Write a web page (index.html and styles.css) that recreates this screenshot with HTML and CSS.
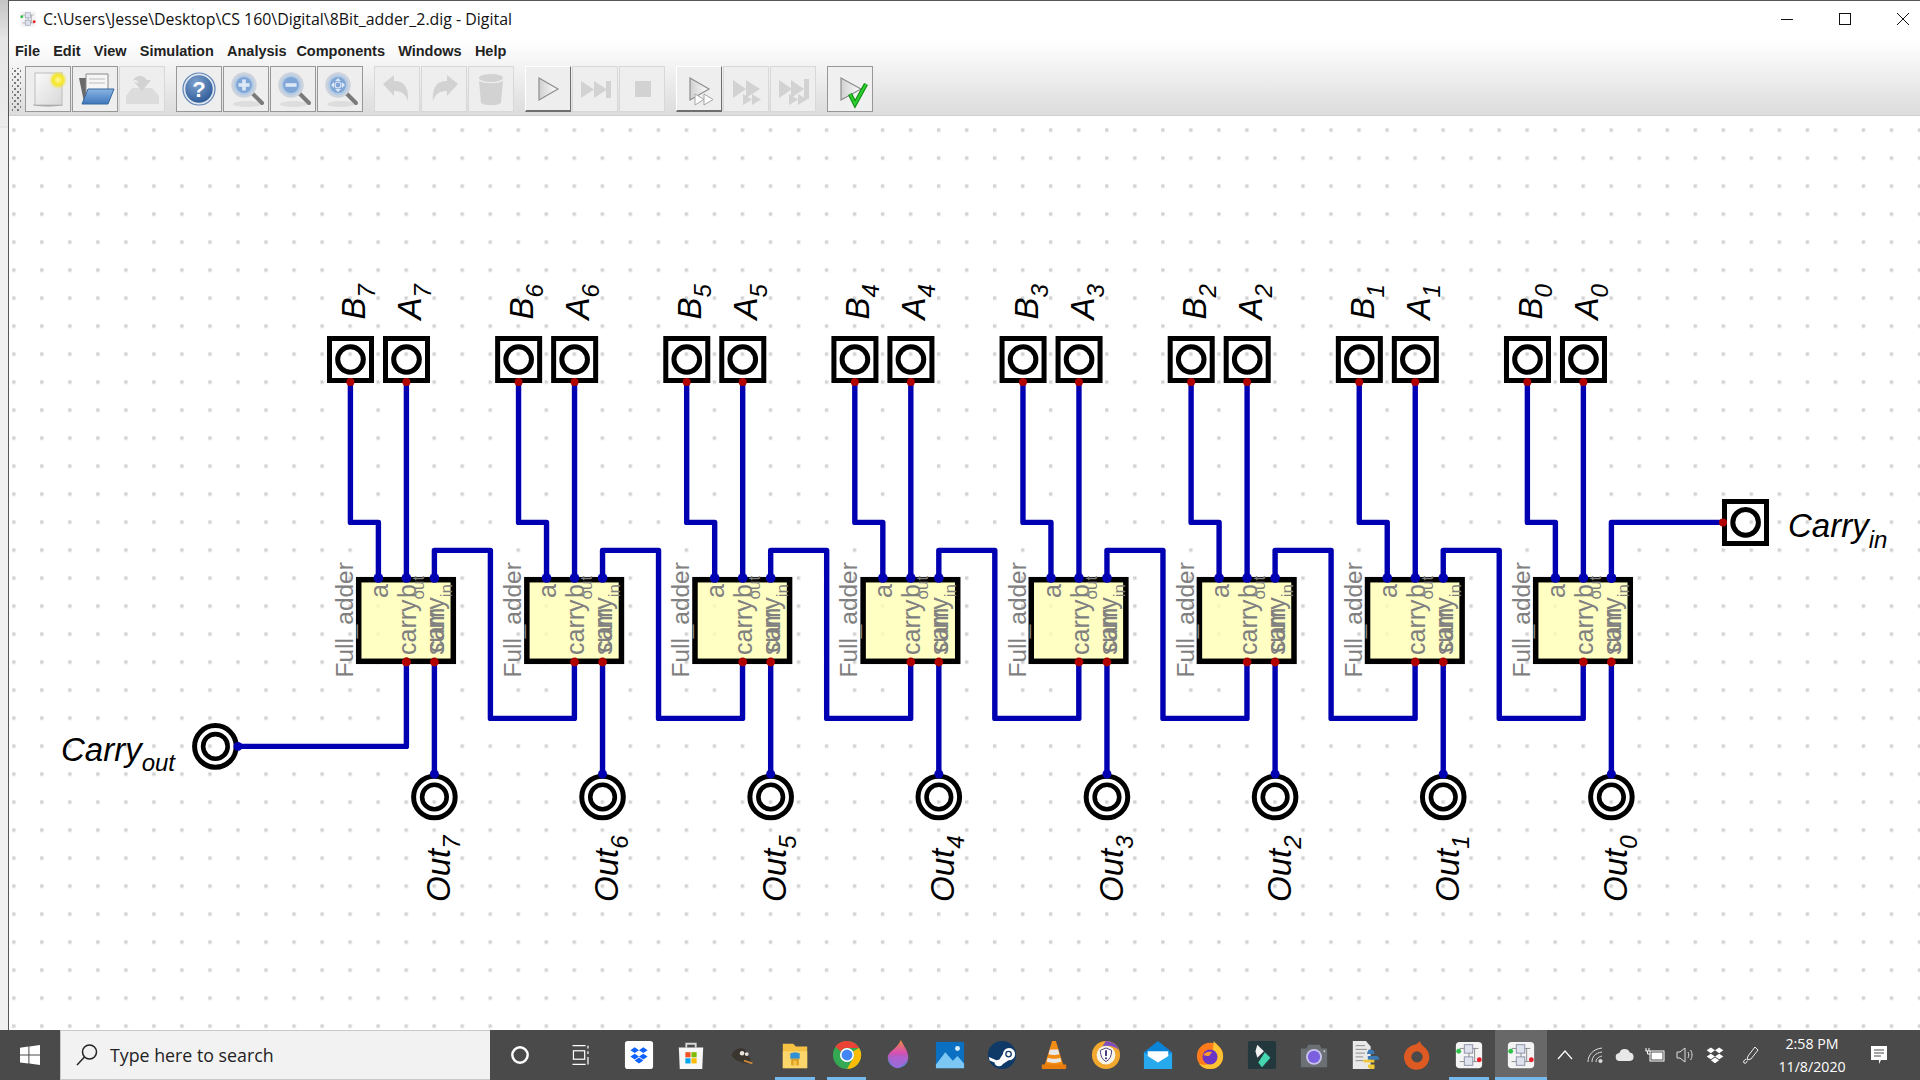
FILE: index.html
```html
<!DOCTYPE html>
<html lang="en">
<head>
  <meta charset="UTF-8" />
  <title>8Bit_adder_2.dig - Digital</title>
  <link rel="stylesheet" href="styles.css">
</head>
<body>

  <!-- shared icons -->
  <svg class="sprite" aria-hidden="true">
    <defs>
      <linearGradient id="gPage" x1="0" y1="0" x2="1" y2="1"><stop offset="0" stop-color="#fafafa"/><stop offset="1" stop-color="#d8d8d8"/></linearGradient>
      <linearGradient id="gPlay" x1="0" y1="0" x2="1" y2="0"><stop offset="0" stop-color="#d0d0d0"/><stop offset="1" stop-color="#fdfdfd"/></linearGradient>
      <linearGradient id="gFolder" x1="0" y1="0" x2="0" y2="1"><stop offset="0" stop-color="#8ab4e4"/><stop offset="1" stop-color="#3f78bd"/></linearGradient>
      <radialGradient id="gHelp" cx=".4" cy=".3" r=".8"><stop offset="0" stop-color="#7fa3d0"/><stop offset="1" stop-color="#23508f"/></radialGradient>
      <radialGradient id="gGlow"><stop offset="0" stop-color="#fff9a0"/><stop offset=".55" stop-color="#f4e524"/><stop offset="1" stop-color="#f4e524" stop-opacity="0"/></radialGradient>
      <linearGradient id="gFlame" x1="0" y1="0" x2="0" y2="1"><stop offset="0" stop-color="#f28a3c"/><stop offset=".45" stop-color="#d84fb4"/><stop offset="1" stop-color="#3f8fe0"/></linearGradient>

      <symbol id="lens" viewBox="0 0 44 44">
        <ellipse cx="23" cy="37" rx="14" ry="3" fill="#ddd"/>
        <path d="M28 26l10 10" stroke="#7a7a7a" stroke-width="4" stroke-linecap="round"/>
        <circle cx="20" cy="18" r="11.500" fill="#b4cbe6" stroke="#cdd3dc" stroke-width="2.500"/>
        <circle cx="20" cy="18" r="8" fill="#7fa6d6"/>
      </symbol>

      <symbol id="app" viewBox="0 0 32 32">
        <rect x="2" y="2" width="28" height="28" rx="4" fill="#f4f4f4"/>
        <path d="M6 9h6M20 9h6M6 23h6M20 23h6M16 13v6M22 9v14" stroke="#8a8a8a" fill="none"/>
        <rect x="11" y="5" width="9" height="9" fill="#dfe3ee" stroke="#8b8fa8"/>
        <rect x="11" y="18" width="9" height="9" fill="#dfe3ee" stroke="#8b8fa8"/>
        <circle cx="5" cy="12" r="2.6" fill="#2fc24a"/>
        <circle cx="27" cy="21" r="2.6" fill="#e8202a"/>
      </symbol>

      <symbol id="dbx" viewBox="0 0 24 24">
        <path d="M7 3l5 3.4-5 3.4-5-3.4zM17 3l5 3.4-5 3.4-5-3.4zM7 10.4l5 3.4-5 3.4-5-3.4zM17 10.4l5 3.4-5 3.4-5-3.4zM12 15l5 3.4-5 3.4-5-3.4z"/>
      </symbol>

      <!-- schematic parts, drawn at the position of the leftmost bit -->
      <g id="input">
        <rect class="part" x="329.5" y="338.5" width="42" height="42"/>
        <circle class="part" cx="350.5" cy="359.5" r="12.8"/>
        <circle class="pin-out" cx="350.4" cy="382" r="4"/>
      </g>
      <g id="output">
        <circle class="part" cx="434.4" cy="797" r="20.8"/>
        <circle class="part part-thin" cx="434.4" cy="797" r="12.3"/>
      </g>
      <g id="bit">
        <path class="wire" d="M350 382V522H378V578"/>
        <path class="wire" d="M406 382V578"/>
        <path class="wire" d="M434 662V774"/>
        <use href="#input"/>
        <use href="#input" x="56"/>
        <use href="#output"/>
        <circle class="pin-in" cx="434.4" cy="774" r="4.5"/>

        <rect class="adder" x="358.7" y="579.7" width="94.6" height="81.6"/>
        <text class="pin-text pin-title" transform="translate(353 677.5) rotate(-90)">Full_adder</text>
        <text class="pin-text" transform="translate(388 584) rotate(-90)" text-anchor="end">a</text>
        <text class="pin-text" transform="translate(416 584) rotate(-90)" text-anchor="end">b</text>
        <text class="pin-text" transform="translate(444 584) rotate(-90)" text-anchor="end">carry<tspan class="pin-sub" dy="8">in</tspan></text>
        <text class="pin-text" transform="translate(416 655) rotate(-90)">carry<tspan class="pin-sub" dy="8">out</tspan></text>
        <text class="pin-text" transform="translate(444 655) rotate(-90)">sum</text>

        <circle class="pin-in" cx="378.4" cy="578" r="4.8"/>
        <circle class="pin-in" cx="406.4" cy="578" r="4.8"/>
        <circle class="pin-in" cx="434.4" cy="578" r="4.8"/>
        <circle class="pin-out" cx="406.4" cy="662" r="4.4"/>
        <circle class="pin-out" cx="434.4" cy="662" r="4.4"/>
      </g>
      <path id="carry" class="wire" d="M434 578V550H490V718H574V662"/>
    </defs>
  </svg>

  <div class="desktop">
    <div class="strip"></div>

    <div class="window">
      <div class="titlebar">
        <svg class="app-icon"><use href="#app"/></svg>
        <span class="title">C:\Users\Jesse\Desktop\CS 160\Digital\8Bit_adder_2.dig - Digital</span>
        <div class="controls">
          <svg width="14" height="14" viewBox="0 0 14 14"><path d="M1 7.5h12" stroke="#111"/></svg>
          <svg width="14" height="14" viewBox="0 0 14 14"><rect x="1.5" y="1.5" width="11" height="11" fill="none" stroke="#111"/></svg>
          <svg width="14" height="14" viewBox="0 0 14 14"><path d="M1 1l12 12M13 1L1 13" stroke="#111"/></svg>
        </div>
      </div>

      <div class="chrome">
        <nav class="menu">
          <span>File</span><span>Edit</span><span>View</span><span>Simulation</span><span class="menu-tight">Analysis</span><span>Components</span><span>Windows</span><span>Help</span>
        </nav>

        <div class="toolbar">
          <div class="grip"></div>

          <div class="tool-group">
            <div class="btn"><svg viewBox="0 0 44 44">
              <ellipse cx="22" cy="38" rx="15" ry="1.5" fill="#999"/>
              <rect x="9" y="6" width="27" height="32" fill="url(#gPage)" stroke="#bdbdbd"/>
              <circle cx="32" cy="13" r="9" fill="url(#gGlow)"/>
            </svg></div>
            <div class="btn"><svg viewBox="0 0 44 44">
              <path d="M6 11h10l2 2v22H11z" fill="#6a6a6a"/>
              <path d="M13 7h22v24H13z" fill="#f6f6f6" stroke="#8a8a8a"/>
              <path d="M16 12h16M16 16h16" stroke="#bbb"/>
              <path d="M15 22h26l-6 15H9z" fill="url(#gFolder)" stroke="#35679f"/>
            </svg></div>
            <div class="btn btn-off"><svg viewBox="0 0 44 44" fill="#d2d2d2">
              <path d="M12 21h20l7 8v8H6v-8z" fill="#dcdcdc"/>
              <path d="M13 14c2-6 10-7 14-1h4l-9 11-8-9 4 1c0-3-3-4-5-2z"/>
            </svg></div>
          </div>

          <div class="tool-group">
            <div class="btn"><svg viewBox="0 0 44 44">
              <circle cx="22" cy="22" r="14.5" fill="url(#gHelp)" stroke="#dfe6f0" stroke-width="1.6"/>
              <circle cx="22" cy="22" r="16" fill="none" stroke="#5c81b4" stroke-width="1.2"/>
              <text class="help-mark" x="22" y="29.5" text-anchor="middle">?</text>
            </svg></div>
            <div class="btn"><svg viewBox="0 0 44 44">
              <use href="#lens" width="44" height="44"/>
              <path d="M20 12.5v11M14.5 18h11" stroke="#dce8f6" stroke-width="3.6"/>
            </svg></div>
            <div class="btn"><svg viewBox="0 0 44 44">
              <use href="#lens" width="44" height="44"/>
              <path d="M14.5 18h11" stroke="#dce8f6" stroke-width="3.6"/>
            </svg></div>
            <div class="btn"><svg viewBox="0 0 44 44">
              <use href="#lens" width="44" height="44"/>
              <path d="M20 11l3 3h-6zM20 25l3-3h-6zM13 18l3-3v6zM27 18l-3-3v6z" fill="#dce8f6"/>
              <circle cx="20" cy="18" r="3" fill="none" stroke="#dce8f6" stroke-width="1.2"/>
            </svg></div>
          </div>

          <div class="tool-group">
            <div class="btn btn-off"><svg viewBox="0 0 44 44" fill="#d2d2d2">
              <path d="M8 17l11-9v6c9 0 15 5 14 20-3-8-7-10-14-10v5z"/>
            </svg></div>
            <div class="btn btn-off"><svg viewBox="0 0 44 44" fill="#d2d2d2">
              <path d="M36 17L25 8v6c-9 0-15 5-14 20 3-8 7-10 14-10v5z"/>
            </svg></div>
            <div class="btn btn-off"><svg viewBox="0 0 44 44" fill="#d2d2d2">
              <ellipse cx="22" cy="11" rx="12" ry="4"/>
              <path d="M10 14c6 3 18 3 24 0l-2 22c-4 3-16 3-20 0z"/>
            </svg></div>
          </div>

          <div class="tool-group">
            <div class="btn btn-raised"><svg viewBox="0 0 44 44">
              <path d="M13 11l19 11-19 11z" fill="url(#gPlay)" stroke="#8d8d8d" stroke-width="1.2"/>
            </svg></div>
            <div class="btn btn-off"><svg viewBox="0 0 44 44" fill="#d2d2d2">
              <path d="M8 14l13 8.500-13 8.500zM21 14l13 8.500-13 8.500zM33 14h5v17h-5z"/>
            </svg></div>
            <div class="btn btn-off"><svg viewBox="0 0 44 44"><rect x="15" y="14" width="16" height="16" fill="#d2d2d2"/></svg></div>
          </div>

          <div class="tool-group">
            <div class="btn btn-raised"><svg viewBox="0 0 44 44">
              <path d="M13 11l19 11-19 11z" fill="url(#gPlay)" stroke="#8d8d8d" stroke-width="1.2"/>
              <path d="M18 27l9 5.500-9 5.500zM27 27l9 5.500-9 5.500z" fill="#fff" stroke="#a5a5a5"/>
            </svg></div>
            <div class="btn btn-off"><svg viewBox="0 0 44 44" fill="#d2d2d2">
              <path d="M9 13l13 9-13 9zM22 13l14 9-14 9zM19 27l9 5.500-9 5.500zM28 27l9 5.500-9 5.500z"/>
            </svg></div>
            <div class="btn btn-off"><svg viewBox="0 0 44 44" fill="#d2d2d2">
              <path d="M8 13l13 9-13 9zM20 13l13 9-13 9zM33 12h5v20h-5zM18 27l9 5.500-9 5.500zM27 27l9 5.500-9 5.500z"/>
            </svg></div>
          </div>

          <div class="tool-group">
            <div class="btn btn-check"><svg viewBox="0 0 44 44">
              <path d="M13 11l20 11-20 11z" fill="url(#gPlay)" stroke="#8d8d8d" stroke-width="1.2"/>
              <path d="M22 27l5 10 11-20" fill="none" stroke="#0c8f12" stroke-width="4.400"/>
              <path d="M22 27l5 10 11-20" fill="none" stroke="#2fd02f" stroke-width="2"/>
            </svg></div>
          </div>
        </div>
      </div>

      <svg class="canvas" viewBox="9 116 1911 914">
        <defs>
          <pattern id="dots" x="320.4" y="296.4" width="28.025" height="28" patternUnits="userSpaceOnUse">
            <rect width="3.4" height="3.4" fill="#d2d2d2"/>
          </pattern>
        </defs>
        <rect x="9" y="116" width="1911" height="914" fill="#fff"/>
        <rect x="9" y="116" width="1911" height="914" fill="url(#dots)"/>

        <!-- carry chain between the bits -->
        <use href="#carry"/>
        <use href="#carry" x="168.14"/>
        <use href="#carry" x="336.28"/>
        <use href="#carry" x="504.42"/>
        <use href="#carry" x="672.56"/>
        <use href="#carry" x="840.7"/>
        <use href="#carry" x="1008.84"/>

        <g>
          <use href="#bit"/>
          <text class="label" transform="translate(365 319.5) rotate(-90)">B<tspan class="sub" dy="10">7</tspan></text>
          <text class="label" transform="translate(421 319.5) rotate(-90)">A<tspan class="sub" dy="10">7</tspan></text>
          <text class="label" transform="translate(450 902) rotate(-90)">Out<tspan class="sub" dy="10">7</tspan></text>
        </g>
        <g transform="translate(168.14 0)">
          <use href="#bit"/>
          <text class="label" transform="translate(365 319.5) rotate(-90)">B<tspan class="sub" dy="10">6</tspan></text>
          <text class="label" transform="translate(421 319.5) rotate(-90)">A<tspan class="sub" dy="10">6</tspan></text>
          <text class="label" transform="translate(450 902) rotate(-90)">Out<tspan class="sub" dy="10">6</tspan></text>
        </g>
        <g transform="translate(336.28 0)">
          <use href="#bit"/>
          <text class="label" transform="translate(365 319.5) rotate(-90)">B<tspan class="sub" dy="10">5</tspan></text>
          <text class="label" transform="translate(421 319.5) rotate(-90)">A<tspan class="sub" dy="10">5</tspan></text>
          <text class="label" transform="translate(450 902) rotate(-90)">Out<tspan class="sub" dy="10">5</tspan></text>
        </g>
        <g transform="translate(504.42 0)">
          <use href="#bit"/>
          <text class="label" transform="translate(365 319.5) rotate(-90)">B<tspan class="sub" dy="10">4</tspan></text>
          <text class="label" transform="translate(421 319.5) rotate(-90)">A<tspan class="sub" dy="10">4</tspan></text>
          <text class="label" transform="translate(450 902) rotate(-90)">Out<tspan class="sub" dy="10">4</tspan></text>
        </g>
        <g transform="translate(672.56 0)">
          <use href="#bit"/>
          <text class="label" transform="translate(365 319.5) rotate(-90)">B<tspan class="sub" dy="10">3</tspan></text>
          <text class="label" transform="translate(421 319.5) rotate(-90)">A<tspan class="sub" dy="10">3</tspan></text>
          <text class="label" transform="translate(450 902) rotate(-90)">Out<tspan class="sub" dy="10">3</tspan></text>
        </g>
        <g transform="translate(840.7 0)">
          <use href="#bit"/>
          <text class="label" transform="translate(365 319.5) rotate(-90)">B<tspan class="sub" dy="10">2</tspan></text>
          <text class="label" transform="translate(421 319.5) rotate(-90)">A<tspan class="sub" dy="10">2</tspan></text>
          <text class="label" transform="translate(450 902) rotate(-90)">Out<tspan class="sub" dy="10">2</tspan></text>
        </g>
        <g transform="translate(1008.84 0)">
          <use href="#bit"/>
          <text class="label" transform="translate(365 319.5) rotate(-90)">B<tspan class="sub" dy="10">1</tspan></text>
          <text class="label" transform="translate(421 319.5) rotate(-90)">A<tspan class="sub" dy="10">1</tspan></text>
          <text class="label" transform="translate(450 902) rotate(-90)">Out<tspan class="sub" dy="10">1</tspan></text>
        </g>
        <g transform="translate(1176.98 0)">
          <use href="#bit"/>
          <text class="label" transform="translate(365 319.5) rotate(-90)">B<tspan class="sub" dy="10">0</tspan></text>
          <text class="label" transform="translate(421 319.5) rotate(-90)">A<tspan class="sub" dy="10">0</tspan></text>
          <text class="label" transform="translate(450 902) rotate(-90)">Out<tspan class="sub" dy="10">0</tspan></text>
        </g>

        <!-- carry in -->
        <path class="wire" d="M1611 578V522H1723"/>
        <circle class="pin-in" cx="1611.4" cy="578" r="4.8"/>
        <rect class="part" x="1724.5" y="501.5" width="42" height="42"/>
        <circle class="part" cx="1745.6" cy="522.4" r="12.8"/>
        <circle class="pin-out" cx="1723" cy="522.4" r="4"/>
        <text class="label" x="1788" y="537">Carry<tspan class="sub" dy="11">in</tspan></text>

        <!-- carry out -->
        <path class="wire" d="M406 662V746H238"/>
        <circle class="part" cx="215.4" cy="746.4" r="20.8"/>
        <circle class="part part-thin" cx="215.4" cy="746.4" r="12.3"/>
        <circle class="pin-in" cx="238" cy="746.4" r="4.5"/>
        <circle class="pin-out" cx="406.4" cy="662" r="4.4"/>
        <text class="label" x="61" y="761">Carry<tspan class="sub" dy="10">out</tspan></text>
      </svg>
    </div>
  </div>

  <footer class="taskbar">
    <div class="start">
      <svg width="22" height="22" viewBox="0 0 22 22" fill="#fff"><path d="M1 3.8l8.4-1.2v8H1zM10.4 2.4L21 1v9.6H10.4zM1 11.6h8.4v8L1 18.4zM10.4 11.6H21V21l-10.6-1.4z"/></svg>
    </div>
    <div class="search">
      <svg width="24" height="24" viewBox="0 0 24 24" fill="none" stroke="#222" stroke-width="1.5"><circle cx="14.5" cy="9" r="7"/><path d="M9.5 14L2 22"/></svg>
      <span>Type here to search</span>
    </div>

    <div class="tile tile-wide"><svg class="ico" viewBox="0 0 32 32"><circle cx="16" cy="16" r="8.2" fill="none" stroke="#fff" stroke-width="2.6"/></svg></div>
    <div class="tile tile-wide"><svg class="ico" viewBox="0 0 32 32" fill="none" stroke="#fff" stroke-width="1.3"><path d="M8 6h14M8 26h14M24.5 6v3M24.5 12v3M24.5 18v8"/><rect x="9" y="11.5" width="12" height="9"/></svg></div>

    <div class="tile tile-first"><svg class="ico" viewBox="0 0 32 32">
      <rect x="1" y="1" width="30" height="30" rx="3" fill="#fff"/>
      <use href="#dbx" x="5" y="4" width="22" height="24" fill="#0f62fe"/>
    </svg></div>
    <div class="tile"><svg class="ico" viewBox="0 0 32 32">
      <path d="M11 8V4h10v4" fill="none" stroke="#d8d8d8" stroke-width="2"/>
      <path d="M3 8h26l-1 23H4z" fill="#f7f7f7"/>
      <path d="M10 13h5.500v5.500H10z" fill="#f25022"/><path d="M16.500 13H22v5.500h-5.500z" fill="#7fba00"/>
      <path d="M10 19.500h5.500V25H10z" fill="#00a4ef"/><path d="M16.500 19.500H22V25h-5.500z" fill="#ffb900"/>
    </svg></div>
    <div class="tile"><svg class="ico" viewBox="0 0 32 32">
      <path d="M4 16c2-6 9-9 14-6l4 6 3 8c-5 2-9 1-11-1-3 0-8-2-10-7z" fill="#3b3530"/>
      <circle cx="15" cy="14" r="2.400" fill="#e8e4dc"/><circle cx="20" cy="15" r="2" fill="#e8e4dc"/>
      <path d="M17 22l9 3" stroke="#c78a3a" stroke-width="2"/>
    </svg></div>
    <div class="tile tile-open"><svg class="ico" viewBox="0 0 32 32">
      <path d="M3 4h11l3 3h12v23H3z" fill="#f5c244"/>
      <path d="M3 12h26v18H3z" fill="#fbd66a"/>
      <path d="M11 14l5-1 5 1v6H11z" fill="#2f90d8"/>
      <rect x="12" y="20" width="8" height="7" fill="#d79a22"/><rect x="14" y="22" width="4" height="5" fill="#f5c244"/>
    </svg></div>
    <div class="tile tile-open"><svg class="ico" viewBox="0 0 32 32">
      <circle cx="16" cy="16" r="15" fill="#34a853"/>
      <path d="M16 1a15 15 0 0 1 13 7.500H16a7.500 7.500 0 0 0-6.500 3.700L3.500 7A15 15 0 0 1 16 1z" fill="#ea4335"/>
      <path d="M29 8.500A15 15 0 0 1 16 31l6.500-11.500A7.500 7.500 0 0 0 22.500 12z" fill="#fbbc05"/>
      <circle cx="16" cy="16" r="7.500" fill="#fff"/><circle cx="16" cy="16" r="5.800" fill="#4285f4"/>
    </svg></div>
    <div class="tile"><svg class="ico" viewBox="0 0 32 32">
      <path d="M19 0c3 6 8 12 8 19a11 11 0 0 1-22 0C5 12 15 10 19 0z" fill="url(#gFlame)"/>
      <path d="M8 20c5-5 11-4 18-1-2 6-6 11-11 11-4 0-7-4-7-10z" fill="#b85fd6" opacity=".7"/>
    </svg></div>
    <div class="tile"><svg class="ico" viewBox="0 0 32 32">
      <rect x="1" y="2" width="30" height="28" fill="#0b6fc2"/>
      <path d="M1 26l10-13 8 9 5-5 7 8v5H1z" fill="#7cc7f3"/>
      <circle cx="24" cy="9" r="2.600" fill="#d6f0ff"/>
    </svg></div>
    <div class="tile"><svg class="ico" viewBox="0 0 32 32">
      <circle cx="16" cy="16" r="15" fill="#0f3a68"/>
      <path d="M2 18l8 3.500a5 5 0 0 1 3-.5l4-6a6.500 6.500 0 1 1 6 6.500l-6 4A4.800 4.800 0 0 1 8 24l-5.200-2.200z" fill="#fff"/>
      <circle cx="23" cy="15" r="3.600" fill="#0f3a68"/><circle cx="23" cy="15" r="2.200" fill="#fff"/>
    </svg></div>
    <div class="tile"><svg class="ico" viewBox="0 0 32 32">
      <path d="M14 1h4l8 26H6z" fill="#f28c13"/>
      <path d="M11.600 10h8.800l1.400 5c-3 1.500-8.600 1.500-11.600 0zM9.400 19c3 1.500 10.200 1.500 13.200 0l1.200 4c-4 2-11.600 2-15.600 0z" fill="#e8e8e8"/>
      <path d="M3 26h26v4a3 3 0 0 1-3 1H6a3 3 0 0 1-3-1z" fill="#e87c0c"/>
    </svg></div>
    <div class="tile"><svg class="ico" viewBox="0 0 32 32">
      <circle cx="16" cy="16" r="15" fill="#f2a72e"/>
      <path d="M16 1a15 15 0 0 1 14 10c-5-5-12-6-18-4z" fill="#7c4fc0"/>
      <circle cx="16" cy="16" r="10" fill="#f7f4ea"/>
      <path d="M16 8.500l6 2.500c0 6-2 10-6 12-4-2-6-6-6-12z" fill="#fff" stroke="#4a3a7a"/>
      <path d="M16 11v6" stroke="#4a3a7a" stroke-width="2.200"/><circle cx="16" cy="19.500" r="1.200" fill="#4a3a7a"/>
    </svg></div>
    <div class="tile"><svg class="ico" viewBox="0 0 32 32">
      <path d="M1 13L16 1l15 12v18H1z" fill="#0a84d6"/>
      <path d="M1 13l15 10 15-10v18H1z" fill="#27a9ee"/>
      <path d="M5 12h22v5l-11 7-11-7z" fill="#ffffff"/>
    </svg></div>
    <div class="tile"><svg class="ico" viewBox="0 0 32 32">
      <circle cx="16" cy="17" r="14" fill="#ff7a1a"/>
      <path d="M20 1c3 4 10 8 10 16 0 8-6 14-14 14-5 0-9-2-12-6 4 2 10 2 14-1 4-4 4-10 1-14z" fill="#ffc233"/>
      <circle cx="16" cy="18" r="8" fill="#6a35c4"/>
      <path d="M9 16c2-3 6-4 9-3l-3 4c-2 0-4 0-6-1z" fill="#ff9d2f"/>
    </svg></div>
    <div class="tile"><svg class="ico" viewBox="0 0 32 32">
      <rect x="1" y="1" width="30" height="30" rx="2" fill="#23383c"/>
      <path d="M11 5l7 7-7 7-2-7z" fill="#f2f2f2"/>
      <path d="M19 13l6 6-9 10-4-5z" fill="#45d6b0"/>
    </svg></div>
    <div class="tile"><svg class="ico" viewBox="0 0 32 32">
      <path d="M2 9h6l2-4h12l2 4h6v20H2z" fill="#6b7075"/>
      <circle cx="16" cy="18" r="8.500" fill="#c9c3ee"/><circle cx="16" cy="18" r="6.500" fill="#7a5fe0"/>
      <circle cx="27" cy="12" r="1" fill="#ccc"/>
    </svg></div>
    <div class="tile"><svg class="ico" viewBox="0 0 32 32">
      <path d="M3 1h14l5 6v24H3z" fill="#e9e9e9"/>
      <path d="M6 6h10M6 10h12M6 14h10M6 18h8M6 22h8" stroke="#888"/>
      <path d="M20 10c6 0 6 2 6 5h-7v2h9c3 0 3 3 3 4H19v-5c0-1-1-2-1-2z" fill="#3c7ab5"/>
      <path d="M25 31c-6 0-6-2-6-5h7v-2h-9c-3 0-3-2-3-3h12v4c0 3 1 6-1 6z" fill="#f0c93a"/>
    </svg></div>
    <div class="tile"><svg class="ico" viewBox="0 0 32 32">
      <path d="M19 1c1 3 2 4 4 6a13.500 13.500 0 1 1-13-1c3-1 6-1 9-5z" fill="#dd5a22"/>
      <circle cx="16" cy="18" r="6" fill="#4a4a4a"/>
    </svg></div>
    <div class="tile tile-open"><svg class="ico"><use href="#app"/></svg></div>
    <div class="tile tile-open tile-active"><svg class="ico"><use href="#app"/></svg></div>

    <div class="tray tray-first"><svg viewBox="0 0 20 20" fill="none" stroke="#fff" stroke-width="1.200"><path d="M3 14l7-8 7 8"/></svg></div>
    <div class="tray"><svg viewBox="0 0 20 20" fill="none" stroke="#ddd"><path d="M3 17c0-7 5-13 14-14M7 17c0-5 3-9 10-10M11 17c0-3 2-5 6-6"/><circle cx="15.500" cy="16" r="1.600" fill="#ddd"/></svg></div>
    <div class="tray"><svg viewBox="0 0 20 20" fill="#e8e8e8"><path d="M5 16a4 4 0 0 1-.6-8 5.500 5.500 0 0 1 10.400-.5A4.300 4.300 0 0 1 15 16z"/></svg></div>
    <div class="tray"><svg viewBox="0 0 20 20" fill="none" stroke="#fff"><rect x="5" y="6" width="14" height="10"/><rect x="7" y="8" width="10" height="6" fill="#fff"/><path d="M1 3v3M4 3v3M0.500 6h4M2.500 6v3h3"/></svg></div>
    <div class="tray"><svg viewBox="0 0 20 20" fill="none" stroke="#ddd"><path d="M2 7h3l5-4v14l-5-4H2zM13 7c1 2 1 4 0 6M15.500 5c2 3 2 7 0 10"/></svg></div>
    <div class="tray"><svg viewBox="0 0 24 24" fill="#fff"><use href="#dbx"/></svg></div>
    <div class="tray tray-pen"><svg viewBox="0 0 20 20" fill="none" stroke="#eee"><path d="M14 2l3 3-7 9-4 1 1-4zM5 14c-2 1-3 3-2 4 2 1 3-1 3-2"/></svg></div>

    <div class="clock"><span>2:58 PM</span><span>11/8/2020</span></div>
    <div class="notify"><svg width="20" height="20" viewBox="0 0 20 20"><path d="M2 1h16v14h-6l-2 4v-4H2z" fill="#fff"/><path d="M5 5h10M5 8h10M5 11h7" stroke="#4a4a4a"/></svg></div>
  </footer>

</body>
</html>
```

FILE: styles.css
```css
html, body {
  margin: 0;
  height: 100%;
  overflow: hidden;
}

body {
  display: flex;
  flex-direction: column;
  font-family: "Open Sans", sans-serif;
  background: #fff;
}

.sprite {
  position: absolute;
  width: 0;
  height: 0;
}

.desktop {
  flex: 1;
  display: flex;
  min-height: 0;
}

.strip {
  width: 8px;
  background: linear-gradient(#c4c4c4 0, #e6e6e6 40px, #ececec 126px, #dedede 127px, #f0f0f0 128px, #f0f0f0 100%);
}

.window {
  flex: 1;
  display: flex;
  flex-direction: column;
  min-width: 0;
  border-left: 1px solid #555;
  border-top: 1px solid #555;
}

/* title bar */
.titlebar {
  height: 36px;
  display: flex;
  align-items: center;
  background: #fff;
}

.app-icon {
  width: 18px;
  height: 18px;
  margin-left: 10px;
  margin-right: 6px;
}

.title {
  font-size: 15.9px;
  color: #111;
}

.controls {
  margin-left: auto;
  margin-right: 10px;
  display: flex;
  gap: 44px;
}

.controls svg {
  display: block;
}

/* menu and toolbar */
.chrome {
  background: linear-gradient(#fff 0, #fcfcfc 10px, #dcdcdc 100%);
  border-bottom: 1px solid #cfcfcf;
}

.menu {
  height: 26px;
  display: flex;
  align-items: center;
  padding-left: 6px;
  font-family: "Liberation Sans", sans-serif;
  font-size: 14.5px;
  font-weight: bold;
  color: #222;
  gap: 13.2px;
  padding-top: 2px;
  box-sizing: border-box;
}

.menu-tight {
  margin-right: -3.5px;
}

.toolbar {
  display: flex;
  padding: 3px 0;
  height: 46px;
}

.grip {
  width: 9px;
  margin: 2px 4px 0 3px;
  background-image: radial-gradient(#777 0.7px, transparent 1.1px), radial-gradient(#777 0.7px, transparent 1.1px);
  background-size: 6px 6px;
  background-position: 0 0, 3px 3px;
}

.tool-group {
  display: flex;
  gap: 1px;
  margin-right: 11px;
}

.btn {
  width: 46px;
  height: 46px;
  box-sizing: border-box;
  border: 1px solid #989898;
  background: #eeeeee;
}

.btn svg {
  display: block;
  width: 44px;
  height: 44px;
}

.btn-off {
  border-color: #d8d8d8;
}

.btn-raised {
  border-color: #fff #6e6e6e #6e6e6e #fff;
  border-width: 1px 1px 2px 1px;
}

.btn-check {
  background: #f0f0f0;
}

.help-mark {
  font-family: "Liberation Sans", sans-serif;
  font-size: 22px;
  font-weight: bold;
  fill: #fff;
}

/* schematic */
.canvas {
  display: block;
  width: 1911px;
  height: 914px;
}

.wire {
  fill: none;
  stroke: #0000b2;
  stroke-width: 5.4;
  stroke-linejoin: round;
  stroke-linecap: round;
  transform: translate(0.4px, 0.4px);
}

.part {
  fill: none;
  stroke: #000;
  stroke-width: 5;
}

.part-thin {
  stroke-width: 4.6;
}

.pin-out {
  fill: #b00000;
}

.pin-in {
  fill: #0000b2;
}

.adder {
  fill: rgba(255, 255, 180, 0.78);
  stroke: #000;
  stroke-width: 5.5;
}

.pin-text {
  font-family: "Liberation Sans", sans-serif;
  font-size: 25px;
  fill: #808080;
}

.pin-title {
  font-size: 24.4px;
}

.pin-sub {
  font-size: 17px;
}

.label {
  font-family: "Liberation Sans", sans-serif;
  font-size: 33px;
  font-style: italic;
  fill: #000;
}

.sub {
  font-size: 24px;
}

/* taskbar */
.taskbar {
  height: 50px;
  flex: none;
  display: flex;
  align-items: stretch;
  background: #4a4a4a;
}

.start {
  width: 60px;
  display: flex;
  align-items: center;
  justify-content: center;
}

.search {
  width: 430px;
  box-sizing: border-box;
  display: flex;
  align-items: center;
  gap: 11px;
  padding-left: 14px;
  background: #f2f2f2;
  border: 1px solid #c9c9c9;
  border-right: none;
  font-size: 17.8px;
  color: #222;
}

.tile {
  width: 51.9px;
  position: relative;
  display: flex;
  align-items: center;
  justify-content: center;
}

.tile-wide {
  width: 60px;
}

.tile-first {
  margin-left: 3px;
}

.ico {
  width: 30px;
  height: 30px;
}

/* blue bar under a running app */
.tile-open::after {
  content: "";
  position: absolute;
  left: 6px;
  right: 6px;
  bottom: 0;
  height: 3px;
  background: #76b9ed;
}

.tile-active {
  background: #686868;
}

.tile-active::after {
  left: 0;
  right: 0;
}

.tray {
  width: 30px;
  display: flex;
  align-items: center;
  justify-content: center;
}

.tray svg {
  width: 20px;
  height: 20px;
}

.tray-first {
  margin-left: 3px;
}

.tray-pen {
  margin-left: 6px;
}

.clock {
  width: 78px;
  margin-left: 7px;
  display: flex;
  flex-direction: column;
  align-items: center;
  justify-content: center;
  gap: 7px;
  font-size: 14.2px;
  line-height: 16px;
  color: #fff;
}

.notify {
  width: 56px;
  display: flex;
  align-items: center;
  justify-content: center;
}
```
